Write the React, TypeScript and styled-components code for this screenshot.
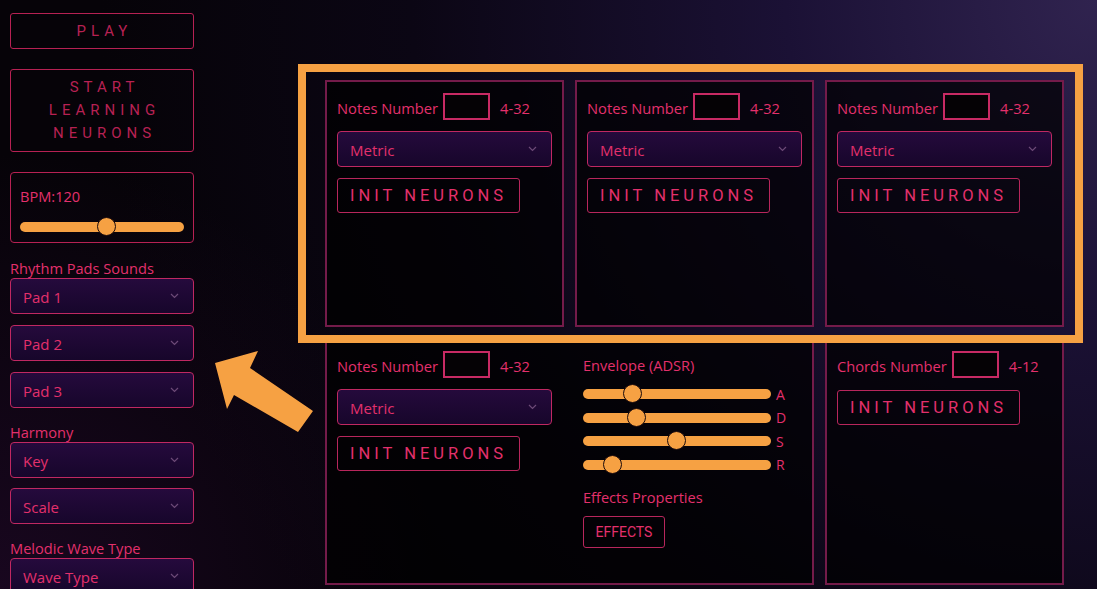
import React, { FC } from 'react'
import styled, { createGlobalStyle } from 'styled-components'

const GlobalStyle = createGlobalStyle`
  html, body {
    margin: 0;
    padding: 0;
    height: 589px;
    overflow: hidden;
  }
  body {
    background:
      radial-gradient(circle at 100% 0%, #30234f 0%, #1b1135 25%, #0b0614 55%, #060308 80%),
      #060308;
    font-family: 'Open Sans', 'Noto Sans', sans-serif;
  }
`

const pink = '#e3306c'
const dimPink = '#b72153'
const orange = '#f6a143'

const Page = styled.div`
  position: relative;
  display: flex;
  height: 589px;
  background: radial-gradient(circle at 0% 100%, rgba(40, 10, 50, 0.55) 0%, rgba(0, 0, 0, 0) 35%);
`

const Sidebar = styled.div`
  width: 184px;
  flex-shrink: 0;
  margin-left: 10px;
  padding-top: 13px;
  display: flex;
  flex-direction: column;

  & > * {
    flex-shrink: 0;
  }
`

const BigButton = styled.div<{ $h: number; $mt?: number }>`
  box-sizing: border-box;
  height: ${p => p.$h}px;
  margin-top: ${p => p.$mt ?? 0}px;
  border: 1px solid ${dimPink};
  border-radius: 3px;
  display: flex;
  flex-direction: column;
  align-items: center;
  justify-content: center;
  font-family: Roboto, 'Liberation Sans', sans-serif;
  font-size: 15px;
  letter-spacing: 5px;
  line-height: 23px;
  color: ${dimPink};
  text-align: center;
  padding-left: 5px;
`

const BpmBox = styled.div`
  box-sizing: border-box;
  margin-top: 20px;
  height: 71px;
  border: 1px solid ${dimPink};
  border-radius: 4px;
  padding: 13px 9px 0 9px;
`

const Label = styled.div<{ $mt?: number }>`
  margin-top: ${p => p.$mt ?? 0}px;
  font-size: 14.6px;
  line-height: 20px;
  color: ${pink};
  white-space: nowrap;
`

const SliderTrack = styled.div<{ $w?: number }>`
  position: relative;
  width: ${p => (p.$w ? `${p.$w}px` : '100%')};
  height: 10px;
  border-radius: 5px;
  background: ${orange};
`

const SliderThumb = styled.div`
  position: absolute;
  top: 50%;
  width: 17px;
  height: 17px;
  margin-left: -10px;
  margin-top: -10px;
  border-radius: 50%;
  background: ${orange};
  border: 1.5px solid #1a0a0c;
`

const SelectBox = styled.div<{ $mt?: number }>`
  box-sizing: border-box;
  height: 36px;
  margin-top: ${p => p.$mt ?? 0}px;
  border: 1px solid #c02862;
  border-radius: 4px;
  background: linear-gradient(180deg, #250a3c 0%, #17062b 100%);
  display: flex;
  align-items: center;
  justify-content: space-between;
  padding: 0 14px 0 12px;
  font-size: 15px;
  color: ${pink};

  & > span {
    padding-top: 1px;
  }
`

const Chevron: FC = () => (
  <svg width="9" height="6" viewBox="0 0 9 6">
    <polyline points="1,1 4.5,4.5 8,1" fill="none" stroke="#6d4a78" strokeWidth="1.2" />
  </svg>
)

const Select: FC<{ label: string; mt?: number }> = ({ label, mt }) => (
  <SelectBox $mt={mt}>
    <span>{label}</span>
    <Chevron />
  </SelectBox>
)

const Main = styled.div`
  margin-left: 131px;
  padding-top: 80px;
  display: grid;
  grid-template-columns: repeat(3, 239px);
  grid-template-rows: 247px 247px;
  gap: 11px;
`

const Panel = styled.div<{ $span?: number }>`
  box-sizing: border-box;
  grid-column: span ${p => p.$span ?? 1};
  border: 2px solid #741b4a;
  background: rgba(0, 0, 0, 0.7);
  padding: 11px 10px 0 10px;
  display: flex;
  gap: 31px;
`

const Column = styled.div<{ $w?: number }>`
  width: ${p => (p.$w ? `${p.$w}px` : 'auto')};
  flex: ${p => (p.$w ? 'none' : '1')};
  display: flex;
  flex-direction: column;
`

const NumberRow = styled.div`
  display: flex;
  align-items: center;
  height: 27px;
  font-size: 14.7px;
  color: ${pink};

  & > span {
    padding-top: 3px;
  }
`

const NumberInput = styled.div`
  box-sizing: border-box;
  width: 47px;
  height: 27px;
  margin: 0 10px 0 5px;
  border: 2px solid #c82a64;
  background: #050205;
`

const InitButton = styled.div<{ $mt: number }>`
  box-sizing: border-box;
  align-self: flex-start;
  width: 183px;
  height: 35px;
  margin-top: ${p => p.$mt}px;
  border: 1px solid #b8265c;
  border-radius: 3px;
  display: flex;
  align-items: center;
  padding-left: 12px;
  font-family: Roboto, 'Liberation Sans', sans-serif;
  font-size: 16.5px;
  letter-spacing: 4px;
  color: ${pink};
  white-space: nowrap;
`

const EnvRow = styled.div<{ $mt: number }>`
  display: flex;
  align-items: center;
  margin-top: ${p => p.$mt}px;
  height: 14px;
`

const EnvLetter = styled.span`
  margin-left: 5px;
  font-size: 14px;
  color: ${pink};
`

const EffectsButton = styled.div`
  box-sizing: border-box;
  align-self: flex-start;
  width: 82px;
  height: 32px;
  margin-top: 9px;
  border: 1px solid #b8265c;
  border-radius: 3px;
  display: flex;
  align-items: center;
  justify-content: center;
  font-family: Roboto, 'Liberation Sans', sans-serif;
  font-size: 14px;
  color: ${pink};
`

const Highlight = styled.div`
  position: absolute;
  left: 298px;
  top: 64px;
  width: 785px;
  height: 279px;
  box-sizing: border-box;
  border: 8px solid ${orange};
  pointer-events: none;
`

const Arrow = styled.svg`
  position: absolute;
  left: 0;
  top: 0;
  pointer-events: none;
`

const NotesNumber: FC<{ label?: string; range?: string }> = ({ label = 'Notes Number', range = '4-32' }) => (
  <NumberRow>
    <span>{label}</span>
    <NumberInput />
    <span>{range}</span>
  </NumberRow>
)

const NotesColumn: FC = () => (
  <Column $w={215}>
    <NotesNumber />
    <Select label="Metric" mt={11} />
    <InitButton $mt={11}>INIT NEURONS</InitButton>
  </Column>
)

const envelope = [
  { letter: 'A', value: 50 },
  { letter: 'D', value: 54 },
  { letter: 'S', value: 94 },
  { letter: 'R', value: 30 },
]

const App: FC = () => (
  <>
    <GlobalStyle />
    <Page>
      <Sidebar>
        <BigButton $h={36}>PLAY</BigButton>
        <BigButton $h={83} $mt={20}>
          <span>START</span>
          <span>LEARNING</span>
          <span>NEURONS</span>
        </BigButton>
        <BpmBox>
          <Label>BPM:120</Label>
          <SliderTrack style={{ marginTop: 16 }}>
            <SliderThumb style={{ left: '53%' }} />
          </SliderTrack>
        </BpmBox>
        <Label $mt={15}>Rhythm Pads Sounds</Label>
        <Select label="Pad 1" />
        <Select label="Pad 2" mt={11} />
        <Select label="Pad 3" mt={11} />
        <Label $mt={14}>Harmony</Label>
        <Select label="Key" />
        <Select label="Scale" mt={10} />
        <Label $mt={14}>Melodic Wave Type</Label>
        <Select label="Wave Type" />
      </Sidebar>

      <Main>
        <Panel>
          <NotesColumn />
        </Panel>
        <Panel>
          <NotesColumn />
        </Panel>
        <Panel>
          <NotesColumn />
        </Panel>

        <Panel $span={2}>
          <NotesColumn />
          <Column>
            <Label style={{ marginTop: 4 }}>Envelope (ADSR)</Label>
            {envelope.map((e, i) => (
              <EnvRow key={e.letter} $mt={i === 0 ? 12 : 9.5}>
                <SliderTrack $w={188}>
                  <SliderThumb style={{ left: e.value }} />
                </SliderTrack>
                <EnvLetter>{e.letter}</EnvLetter>
              </EnvRow>
            ))}
            <Label $mt={15}>Effects Properties</Label>
            <EffectsButton>EFFECTS</EffectsButton>
          </Column>
        </Panel>
        <Panel>
          <Column $w={215}>
            <NotesNumber label="Chords Number" range="4-12" />
            <InitButton $mt={12}>INIT NEURONS</InitButton>
          </Column>
        </Panel>
      </Main>

      <Highlight />
      <Arrow width="1097" height="589" viewBox="0 0 1097 589">
        <polygon
          points="215,363 258,351 250,368 313,411 298,432 234,395 227,409"
          fill={orange}
        />
      </Arrow>
    </Page>
  </>
)

export default App
